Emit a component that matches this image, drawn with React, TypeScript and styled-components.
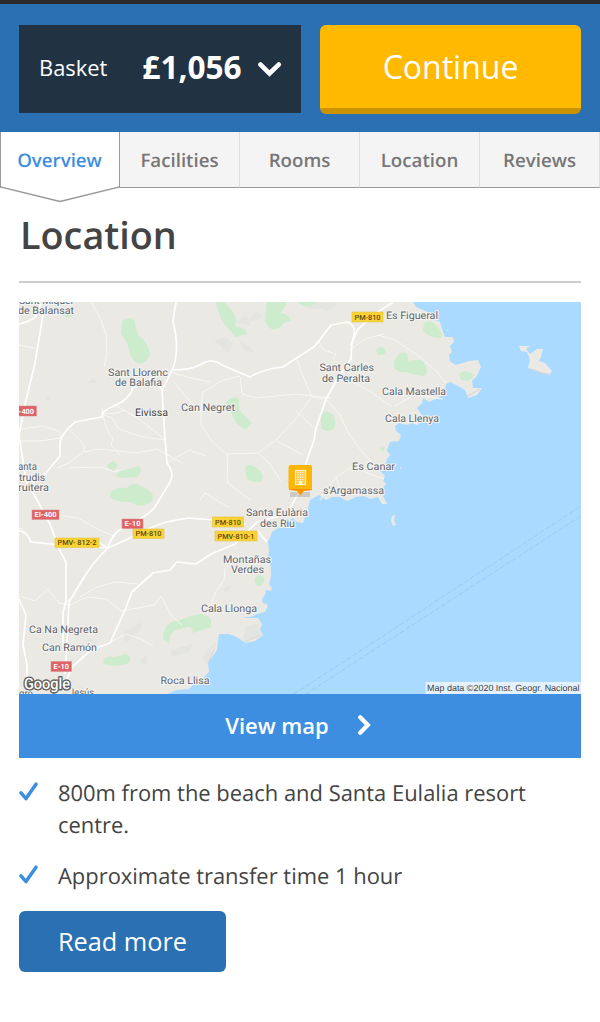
import React from "react";
import styled, { createGlobalStyle } from "styled-components";

const Global = createGlobalStyle`
  * { box-sizing: border-box; }
  body { margin: 0; background: #fff; font-family: "Open Sans", "Noto Sans", sans-serif; color: #444; text-rendering: geometricPrecision; }
  button { font-family: inherit; border: 0; padding: 0; cursor: pointer; }
`;

const Page = styled.div`
  width: 600px;
  min-height: 1022px;
  background: #fff;
`;

const TopBar = styled.header`
  display: flex;
  gap: 19px;
  height: 132px;
  padding: 21px 19px 0;
  border-top: 4px solid #2a2a2a;
  background: #2a70b2;
`;

const Basket = styled.button`
  display: flex;
  align-items: center;
  width: 282px;
  height: 88px;
  padding: 0 18px 2px 20px;
  background: #213243;
  color: #fff;
`;

const BasketLabel = styled.span`
  font-size: 21.9px;
  line-height: 32px;
`;

const Price = styled.span`
  margin-left: 35px;
  margin-right: 15px;
  padding-bottom: 2px;
  font-size: 31.6px;
  line-height: 40px;
  font-weight: 700;
`;

const BasketChevron = styled.svg`
  flex: none;
  margin-top: 2px;
`;

const Continue = styled.button`
  width: 261px;
  height: 89px;
  padding-bottom: 1px;
  border-bottom: 6px solid #cb9300;
  border-radius: 6px;
  background: #ffb901;
  color: #fff;
  font-size: 32px;
`;

const Tabs = styled.nav`
  display: flex;
  height: 56px;
`;

const Tab = styled.a<{ $active?: boolean }>`
  position: relative;
  display: flex;
  align-items: center;
  justify-content: center;
  width: 120px;
  height: 56px;
  padding: ${(p) => (p.$active ? "0 1px 0 0" : "1px 0 0")};
  border-right: 1px solid ${(p) => (p.$active ? "#999" : "#dcdcdc")};
  border-left: ${(p) => (p.$active ? "1px solid #999" : "0")};
  border-bottom: ${(p) => (p.$active ? "0" : "1px solid #999")};
  background: ${(p) => (p.$active ? "#fff" : "#f4f4f4")};
  color: ${(p) => (p.$active ? "#3d8ee0" : "#777")};
  font-size: 18.7px;
  font-weight: 600;
`;

const TabPointer = styled.svg`
  position: absolute;
  left: -1px;
  top: 54px;
`;

const Main = styled.main`
  padding: 19px 19px 0;
`;

const Title = styled.h2`
  margin: 0 0 19px;
  padding: 2px 1px 0;
  height: 76px;
  border-bottom: 2px solid #cdcdcd;
  font-size: 37.8px;
  line-height: 54px;
  font-weight: 600;
`;

const MapPicture = styled.svg`
  display: block;
  width: 562px;
  height: 392px;
  font-family: Roboto, sans-serif;
`;

const ViewMap = styled.button`
  display: flex;
  align-items: center;
  justify-content: center;
  gap: 28px;
  width: 562px;
  height: 64px;
  padding: 0 4px 2px 0;
  background: #3d8ee0;
  color: #fff;
  font-size: 22px;
  font-weight: 600;
`;

const Facts = styled.ul`
  display: flex;
  flex-direction: column;
  gap: 19px;
  margin: 20px 0 0;
  padding: 0;
  list-style: none;
`;

const Fact = styled.li`
  display: flex;
  gap: 19px;
  font-size: 21.93px;
  line-height: 32px;
`;

const Tick = styled.svg`
  flex: none;
  margin-top: 4px;
`;

const ReadMore = styled.button`
  width: 207px;
  height: 61px;
  margin-top: 18px;
  padding-bottom: 2px;
  border-radius: 6px;
  background: #2a70b2;
  color: #fff;
  font-size: 25.3px;
`;

const greens = [
  "M122 321Q131 315 135 322Q135 328 138 335Q148 342 150 354Q147 363 139 364Q130 360 129 349Q127 341 121 334Z",
  "M216 302Q218 315 226 326L236 337L247 334Q247 328 235 326Q238 318 231 309L224 302Z",
  "M267 302L265 321Q270 333 279 328Q283 322 291 321Q291 315 281 313L287 302Z",
  "M298 302Q306 311 318 302Z",
  "M226 402Q233 395 239 399Q237 411 245 416L252 423L245 430L236 423Z",
  "M321 417Q325 406 334 416Q338 431 328 431Q320 431 321 424Z",
  "M245 470Q247 461 255 467Q265 473 262 481Q255 484 247 479Z",
  "M107 465L113 461L118 465L114 470L109 469Z",
  "M116 476Q122 466 126 470L139 466Q144 471 137 477L121 478Z",
  "M110 493Q115 487 127 488Q133 480 141 486Q157 493 152 501Q141 510 131 502Q112 503 110 495Z",
  "M424 323Q431 318 438 327Q444 335 440 338Q429 338 423 331Z",
  "M394 362Q400 349 407 354L409 362Q419 357 424 363Q430 373 424 376Q414 375 407 372Q398 374 394 367Z",
  "M376 350Q381 344 386 350Q386 356 378 355Z",
  "M459 374Q465 368 474 375Q471 383 461 380Z",
  "M255 579Q257 572 264 577Q265 587 258 586Q254 584 255 579Z",
  "M163 639Q163 626 172 622L186 618Q202 610 211 619L211 627Q203 630 192 633Q195 627 187 627L176 630Q168 634 170 644Z",
  "M103 661Q106 655 115 657L125 654Q133 656 129 663Q117 668 104 664Z",
  "M379 448L385 447L383 452Z",
  "M62 313Q68 321 74 315L73 311Z",
  "M23 302L31 302L28 306Z",
];

const hills = [
  "M219 340L227 343L223 348ZM239 340L248 345L254 352L244 351ZM235 322L246 315L251 326ZM268 305L276 309L270 316ZM305 308L320 303L328 303L318 309Z",
  "M214 341L226 337L233 344L228 352ZM248 321L256 312L263 315L257 320ZM320 307L330 302L338 304L326 311Z",
  "M46 398L50 395L48 403ZM89 383L93 378L97 383ZM137 341L144 338L143 345Z",
  "M222 590L230 585L229 592ZM245 627L257 624L261 636L250 640L243 642ZM206 651L216 641L215 650L207 665L203 659Z",
  "M124 632L142 622L140 630L125 644ZM80 648L89 639L99 642L86 654ZM171 650L193 644L190 651L172 657ZM139 662L147 655L146 665Z",
];

const minorRoads = [
  "M91 302L101 320L106 335L107 353L104 367",
  "M19 345L35 348M101 412Q111 416 126 410M113 404L136 417L157 433L164 439",
  "M22 429L43 426L59 431L61 438L40 441L20 441M68 428L85 446L83 452L69 463L57 468",
  "M84 452L98 449L136 453L157 449L182 463M102 407Q105 433 113 438L111 445L120 455",
  "M102 414L112 418L118 428L130 433L143 437L165 440M69 468L102 467L114 472L125 469",
  "M170 372L187 377L210 382M172 380L193 405M201 407L201 425L211 440L226 454L258 453L276 440L294 421L311 398",
  "M240 377L242 394L257 398L296 394L331 398M296 358L306 383L312 397L326 399M296 411L313 427",
  "M277 441L303 455M258 453L270 464L281 481M227 454L228 483L250 500M201 407L203 392L223 380L240 376",
  "M318 340L324 350L336 354L333 360M326 399L340 415L349 434L360 449L372 463",
  "M352 382L370 391L386 403L392 406M320 500L336 477L352 467L384 479M336 477L340 489",
  "M378 335L395 340L420 357L438 373L446 383M350 350L365 339L384 334",
  "M395 406L414 395L443 399M167 463L189 450L206 456",
  "M20 596L35 601L48 589L59 603L70 605L87 597L106 599L121 611L154 605L161 596L171 615L182 625",
  "M19 528Q25 528 30 541M51 514L78 518L97 529L116 537M80 597L97 587L116 582L139 584",
  "M109 643L126 634L141 639L153 646M211 605L216 591L224 580L225 568M200 500L205 493L228 507",
];

const majorRoads = [
  "M43 315L35 363L26 400L19 435L26 481L37 500L50 524L59 549L66 562L66 601L63 613L63 644",
  "M176 302L173 321Q180 350 173 368L162 391L165 438L167 463Q175 474 170 482L155 507",
  "M19 324Q32 321 36 316L41 304M173 370Q190 370 200 365Q211 357 222 365L250 377Q263 369 283 367L315 346L331 325L348 322",
  "M155 507Q150 513 140 519L118 531Q111 537 108 548Q93 562 83 579L69 602",
  "M108 548L126 540L145 530L166 522L188 518L214 520L245 524",
  "M19 531Q27 531 31 542L61 545L107 548M108 548L100 543L80 540",
  "M346 322Q359 325 352 342L351 359L335 383L326 399L316 428L314 440L306 463L300 490L288 512",
  "M351 345L358 329L376 313L392 303",
  "M166 369L146 382L133 388Q129 400 114 406Q101 411 102 417L75 422Q62 433 60 442L60 456L46 473L33 483",
  "M65 674Q67 650 69 600M65 684L72 667L91 650L110 643L125 610L132 592L153 573L170 570L177 562L196 564L211 554L235 544L257 522L280 516",
  "M19 599L26 615L23 645L27 665L27 694M48 681L65 680M150 384L156 384L163 390M258 531L266 541",
];

type LabelItem = [string, number, number, number];
const placeLabels: LabelItem[] = [
  ["Sant Miquel", 19, 303.5, 54],
  ["de Balansat", 18, 314, 56],
  ["Sant Llorenc", 108, 376, 60],
  ["de Balafia", 115, 386.2, 47],
  ["Eivissa", 135, 416, 33],
  ["Can Negret", 181, 411, 54],
  ["Es Figueral", 386, 318.7, 52],
  ["Sant Carles", 319.5, 371, 54.5],
  ["de Peralta", 322, 381.5, 48],
  ["Cala Mastella", 382, 394.5, 64],
  ["Cala Llenya", 385, 422, 54],
  ["Es Canar", 352, 470, 43],
  ["s'Argamassa", 323, 493.5, 61],
  ["Santa Eulària", 246, 516.3, 62],
  ["des Riu", 260, 527, 35],
  ["Montañas", 223, 562.7, 48],
  ["Verdes", 231, 573.3, 33],
  ["Cala Llonga", 201, 611.7, 56],
  ["Ca Na Negreta", 29, 632.8, 69],
  ["Can Ramón", 42, 650.5, 55],
  ["Roca Llisa", 160.5, 684, 49],
  ["anta", 18, 470, 19],
  ["trudis", 19, 480.5, 26],
  ["ruitera", 18, 491, 31],
  ["Jesús", 69, 696, 25],
  ["gro", 19, 697, 14],
];

type ShieldItem = [string, number, number, number, number, boolean?];
const shields: ShieldItem[] = [
  ["PM-810", 352, 312, 31, 10],
  ["PM-810", 133, 529, 31, 9.5],
  ["PM-810", 212.5, 517, 31, 10],
  ["PMV-810-1", 215, 531, 42, 10],
  ["PMV- 812-2", 55, 538, 44, 9.5],
  ["-400", 16, 406, 20.5, 10, true],
  ["EI-400", 32, 510, 27, 9.5, true],
  ["E-10", 122, 519, 21, 9.5, true],
  ["E-10", 51, 661.5, 20.5, 10, true],
];

function LocationMap() {
  return (
    <MapPicture viewBox="19 302 562 392" role="img" aria-label="Map">
      <rect x="19" y="302" width="562" height="392" fill="#aadaff" />
      <path
        fill="#eae9e4"
        d="M19 302H413L416 307L423 310L430 313L435 320L440 322L442 329L445 337L453 337L454 342L450 346L452 352L449 355L450 361L455 365L463 363L469 361L478 360L481 367L477 376L472 381L473 388L482 388L477 395L468 398L465 390L458 386L450 382L446 384L444 394L438 398L429 402L423 398L422 403L417 408L422 415L423 421L417 425L412 423L407 425L399 423L395 426L396 431L401 435L399 441L390 442L387 450L390 455L387 459L385 466L380 471L385 476L383 481L386 484L383 488L383 496L387 504L382 504L378 497L370 499L364 496L356 497L347 501L340 497L332 497L326 500L319 495L310 500L308 508L309 513L305 517L303 523L297 522L293 518L290 520L288 527L280 527L272 532L270 538L268 541L269 550L268 558L271 567L271 577L269 584L272 588L271 591L266 590L265 595L262 599L263 603L268 605L265 612L257 614L251 617L243 617L247 618L258 618L262 624L260 630L263 635L255 641L245 643L240 639L234 636L229 634L219 634L217 650L208 663L209 672L204 677L202 683L194 684L189 689L177 690L167 694H19Z"
      />
      <path
        fill="#eae9e4"
        d="M519 346L530 346L526 349L530 354L537 349L543 349L541 357L539 361L545 363L552 371L549 375L541 373L528 368L530 360L527 352L521 351ZM392 516L395 515L394 520L396 525L393 526L391 521ZM400 467L402 468L400 469ZM447 329l2 1l-2 1Z"
      />
      <path fill="none" stroke="#d5d2cd" strokeWidth="1" d="M531 369L542 373L549 374M466 397L480 389M245 642L260 635M208 663L214 650" />
      {hills.map((d) => (
        <path key={d} d={d} fill="#dedfdc" opacity=".45" />
      ))}
      {greens.map((d) => (
        <path key={d} d={d} fill="#cdeccd" />
      ))}
      <g fill="none" stroke="#f7f7f5" strokeWidth="1" strokeLinejoin="round">
        {minorRoads.map((d) => (
          <path key={d} d={d} />
        ))}
      </g>
      <g fill="none" stroke="#fff" strokeWidth="1.7" strokeLinejoin="round" strokeLinecap="round">
        {majorRoads.map((d) => (
          <path key={d} d={d} />
        ))}
      </g>
      <path
        fill="none"
        stroke="#91c3f8"
        strokeWidth=".7"
        strokeDasharray="5 2"
        d="M294 694L380 638L581 506M306 694L380 646L581 516"
      />
      {shields.map(([text, x, y, w, h, red]) => (
        <g key={text + x}>
          <rect x={x} y={y} width={w} height={h} fill={red ? "#de6266" : "#fbd334"} stroke={red ? "#d68a89" : "#dfbd3c"} strokeWidth=".5" />
          <text
            x={x + w / 2}
            y={y + h / 2 + 2.5}
            textAnchor="middle"
            fontSize="7.2"
            fontWeight={red ? 700 : 500}
            fill={red ? "#fff" : "#5c4a13"}
            textLength={w - 5}
            lengthAdjust="spacingAndGlyphs"
          >
            {text}
          </text>
        </g>
      ))}
      {placeLabels.map(([text, x, y, w]) => (
        <text
          key={text}
          x={x}
          y={y}
          fontSize="10.4"
          textLength={w}
          lengthAdjust="spacingAndGlyphs"
          fill={text === "Eivissa" ? "#3d3f3d" : "#5d646b"}
          stroke="#f5f5f3"
          strokeWidth="2"
          strokeLinejoin="round"
          paintOrder="stroke"
        >
          {text}
        </text>
      ))}
      <rect x="290" y="492" width="20" height="5" fill="#aaa" opacity=".5" />
      <rect x="288.5" y="465" width="23.5" height="25" rx="2" fill="#fdb608" />
      <path fill="#ff9500" d="M289 489H312V490L304 491L300.5 495.5L297 491L289 490Z" />
      <rect x="295.5" y="470.5" width="10" height="14" fill="#ffc943" stroke="#fff3d2" strokeWidth="1.2" />
      <path stroke="#fff3d2" strokeWidth="1.3" strokeDasharray="1.3 1" d="M298.2 472V482M300.5 472V482M302.8 472V482" />
      <path fill="#fff" d="M299 481.5H302V485H299Z" />
      <text
        x="24"
        y="689"
        fontSize="15.5"
        fontWeight="500"
        textLength="46"
        lengthAdjust="spacingAndGlyphs"
        fill="#fff"
        stroke="#5c5c5c"
        strokeWidth="2.8"
        strokeLinejoin="round"
        paintOrder="stroke"
      >
        Google
      </text>
      <rect x="425.5" y="682" width="155.5" height="12" fill="#f4f8fb" opacity=".78" />
      <text
        x="427"
        y="690.5"
        fontSize="9"
        fontFamily="Liberation Sans, Arial, sans-serif"
        textLength="152.5"
        lengthAdjust="spacingAndGlyphs"
        fill="#444"
      >
        Map data ©2020 Inst. Geogr. Nacional
      </text>
    </MapPicture>
  );
}

const tabNames = ["Overview", "Facilities", "Rooms", "Location", "Reviews"];
const facts = [
  "800m from the beach and Santa Eulalia resort centre.",
  "Approximate transfer time 1 hour",
];

export default function App() {
  return (
    <Page>
      <Global />
      <TopBar>
        <Basket>
          <BasketLabel>Basket</BasketLabel>
          <Price>£1,056</Price>
          <BasketChevron width="25" height="17" viewBox="0 0 25 17">
            <path
              d="M3.5 3.6L12.5 12.4L21.7 3.6"
              fill="none"
              stroke="#fff"
              strokeWidth="4.7"
              strokeLinecap="round"
            />
          </BasketChevron>
        </Basket>
        <Continue>Continue</Continue>
      </TopBar>
      <Tabs>
        {tabNames.map((name, i) => (
          <Tab key={name} $active={i === 0}>
            {name}
            {i === 0 && (
              <TabPointer width="120" height="18" viewBox="0 0 120 18">
                <path d="M.5 0V1L60 15.5L119.5 1V0Z" fill="#fff" />
                <path d="M.5 0V1L60 15.5L119.5 1V0" fill="none" stroke="#999" strokeWidth="1.3" />
              </TabPointer>
            )}
          </Tab>
        ))}
      </Tabs>
      <Main>
        <Title>Location</Title>
        <LocationMap />
        <ViewMap>
          View map
          <svg width="14" height="22" viewBox="0 0 14 22">
            <path
              d="M3.2 3.2L10.8 11L3.2 18.8"
              fill="none"
              stroke="#fff"
              strokeWidth="4.3"
              strokeLinecap="round"
            />
          </svg>
        </ViewMap>
        <Facts>
          {facts.map((fact) => (
            <Fact key={fact}>
              <Tick width="20" height="20" viewBox="0 0 20 20">
                <path
                  d="M2 10.9L7 16.6L17 2.2"
                  fill="none"
                  stroke="#3d8ee0"
                  strokeWidth="3.5"
                  strokeLinecap="round"
                  strokeLinejoin="round"
                />
              </Tick>
              <span>{fact}</span>
            </Fact>
          ))}
        </Facts>
        <ReadMore>Read more</ReadMore>
      </Main>
    </Page>
  );
}
